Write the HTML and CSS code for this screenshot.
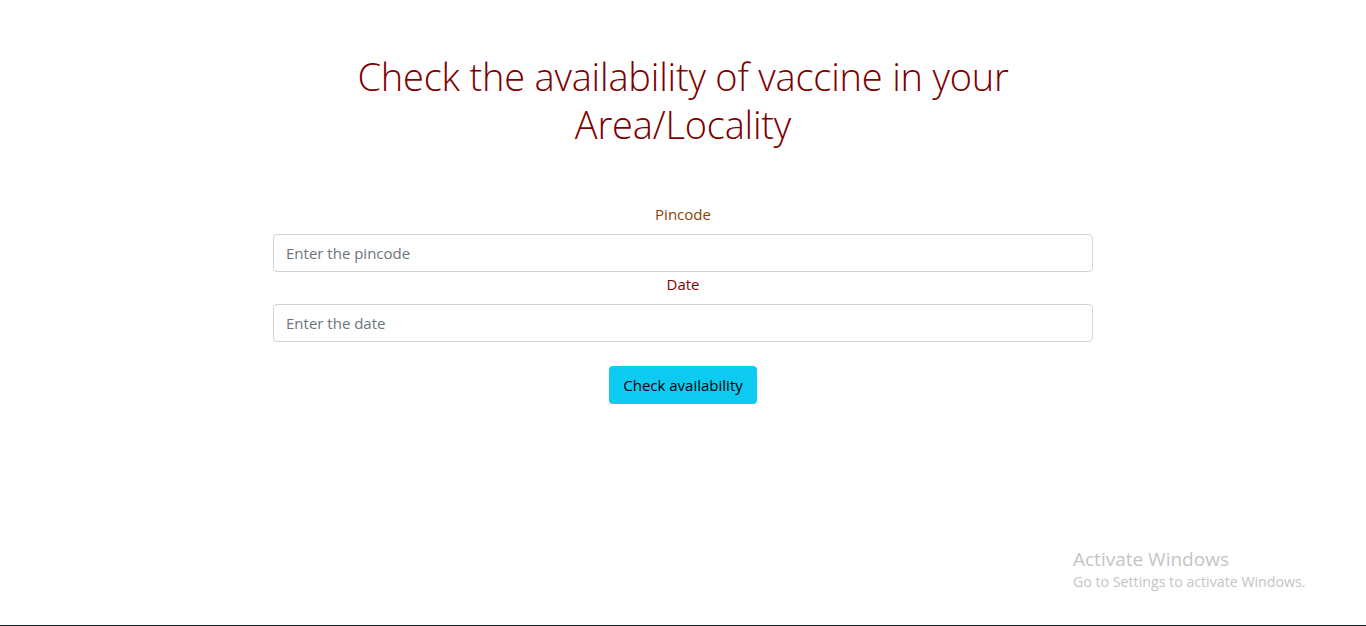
FILE: index.html
```html
<!DOCTYPE html>
<html lang="en">
<head>
<meta charset="utf-8">
<title>Vaccine availability</title>
<link rel="stylesheet" href="styles.css">
</head>
<body>
<main class="page">
  <h1 class="title">Check the availability of vaccine in your Area/Locality</h1>
  <form class="form">
    <label class="label label-pin" for="pin">Pincode</label>
    <input class="input" id="pin" type="text" placeholder="Enter the pincode">
    <label class="label label-date" for="date">Date</label>
    <input class="input" id="date" type="text" placeholder="Enter the date">
    <button class="btn" type="button">Check availability</button>
  </form>
</main>
<div class="watermark">
  <div class="wm-title">Activate Windows</div>
  <div class="wm-sub">Go to Settings to activate Windows.</div>
</div>
<div class="taskbar-edge"></div>
</body>
</html>
```

FILE: styles.css
```css
* { box-sizing: border-box; }
html, body { margin: 0; height: 100%; }
body {
  font-family: "Open Sans", "Noto Sans", sans-serif;
  background: #fff;
  color: #212529;
  position: relative;
  overflow: hidden;
}
.page {
  display: flex;
  flex-direction: column;
  align-items: center;
  padding-top: 52px;
}
.title {
  margin: 0;
  width: 700px;
  text-align: center;
  font-size: 38px;
  font-weight: 300;
  line-height: 48px;
  color: #7d0000;
  letter-spacing: -0.2px;
}
.form {
  width: 820px;
  margin-top: 54px;
  display: flex;
  flex-direction: column;
  align-items: center;
}
.label {
  font-size: 15px;
  line-height: 24px;
  margin-bottom: 8px;
}
.label-pin { color: #8b3d06; }
.label-date { color: #8b0000; }
.input {
  width: 100%;
  height: 38px;
  border: 1px solid #ced4da;
  border-radius: 4px;
  padding: 6px 12px;
  font-family: inherit;
  font-size: 15px;
  color: #212529;
}
.input::placeholder { color: #6c757d; }
.btn {
  margin-top: 24px;
  width: 148px;
  height: 38px;
  border: none;
  border-radius: 4px;
  background: #0dcaf0;
  color: #000;
  font-family: inherit;
  font-size: 15px;
}
.watermark {
  position: absolute;
  left: 1073px;
  top: 546px;
  color: #c4c4c4;
}
.wm-title { font-size: 19px; line-height: 26px; }
.wm-sub { font-size: 14.2px; line-height: 20px; }
.taskbar-edge {
  position: absolute;
  left: 0; right: 0; bottom: 0;
  height: 1px;
  background: #1c2233;
}
```
